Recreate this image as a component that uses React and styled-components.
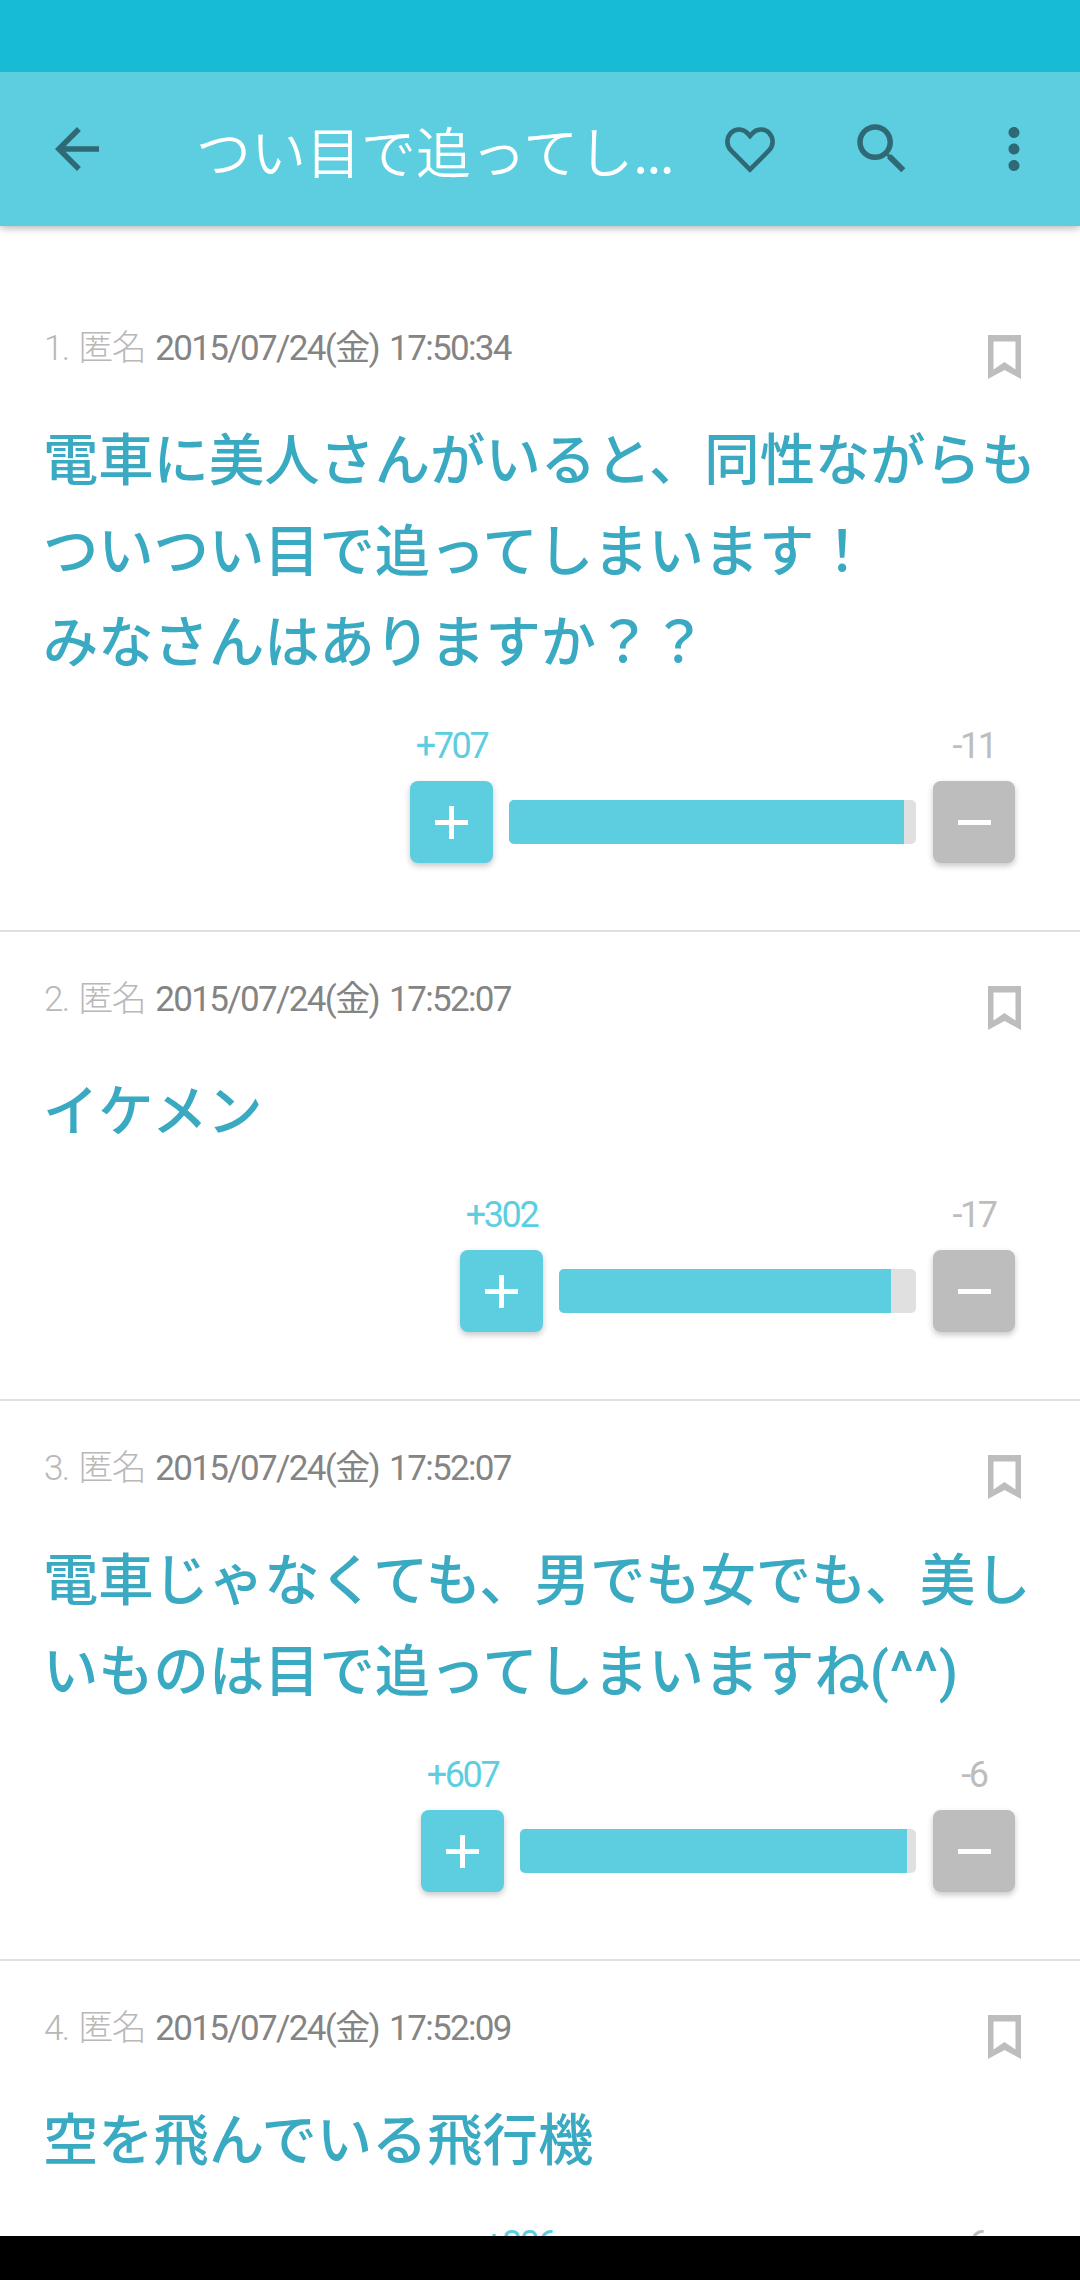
import React from "react";
import styled, { createGlobalStyle } from "styled-components";

const Global = createGlobalStyle`
  html, body { margin: 0; padding: 0; background: #fff; }
  body { font-family: "Roboto", "Noto Sans CJK JP", sans-serif; }
`;
const Screen = styled.div`
  width: 1080px; height: 2280px; display: flex; flex-direction: column; overflow: hidden; background: #fff;
`;
const StatusBar = styled.div`height: 72px; flex: none; background: #17bcd4; position: relative; z-index: 2;`;
const Toolbar = styled.header`
  height: 154px; flex: none; background: #5dcedf; display: flex; align-items: center;
  padding: 0 33px 0 44px; box-shadow: 0 2px 8px rgba(0,0,0,.3); position: relative; z-index: 1;
`;
const TitleText = styled.h1`
  margin: 0 0 0 86px; flex: 1; min-width: 0; font-family: "Noto Sans CJK JP", sans-serif;
  font-weight: 350; font-size: 55px; line-height: 78px; color: #fff; white-space: nowrap; overflow: hidden;
`;
const TitleDots = styled.span`letter-spacing: -1.5px;`;
const ActionIcons = styled.div`display: flex; gap: 66px; align-items: center;`;
const Glyph = styled.svg`width: 66px; height: 66px; display: block; fill: #2f6975; flex: none;`;
const HeartGlyph = styled.svg`
  width: 50px; height: 46px; display: block; flex: none; margin: 1px 8px 0; fill: none; stroke: #2f6975; stroke-width: 4.6px; stroke-linejoin: miter;
`;
const BookmarkGlyph = styled.svg`width: 33px; height: 44px; display: block; flex: none; margin-top: 8px; fill: #bdbdbd;`;
const List = styled.main`flex: 1; min-height: 0; overflow: hidden; padding-top: 55px;`;
const Item = styled.article`
  padding: 46px 65px 67px 44px;
  border-bottom: 2px solid #e0e0e0;
  &:last-child { border-bottom: 0; }
`;
const Head = styled.div`display: flex; justify-content: space-between; align-items: flex-start; height: 84px; margin-right: -6px;`;
const Meta = styled.div`
  font-size: 35px; line-height: 44px; font-weight: 400; color: #848484; letter-spacing: -1.65px; word-spacing: 3px;
  font-family: "Roboto", "Noto Sans CJK JP", sans-serif;
`;
const Author = styled.span`color: #b8b8b8; font-weight: 300;`;
const Body = styled.p`
  margin: 0 -34px 0 -1px; font-family: "Noto Sans CJK JP", sans-serif; font-weight: 500; font-size: 55.3px;
  line-height: 91px; color: #3aa9c2; white-space: pre-line;
`;
const Latin = styled.span`font-family: "Roboto", sans-serif; line-height: 1; letter-spacing: 0.8px;`;
const Vote = styled.div`display: flex; justify-content: flex-end; align-items: flex-end; margin-top: 39px;`;
const VoteSide = styled.div`display: flex; flex-direction: column; align-items: center; flex: none;`;
const Count = styled.div`
  font-size: 36px; line-height: 46px; height: 46px; margin-bottom: 12px; font-weight: 400;
  font-family: "Roboto", sans-serif; letter-spacing: -2.4px; color: ${p => p.$up ? "#5dcedf" : "#bdbdbd"};
`;
const VoteButton = styled.button`
  width: ${p => p.$up ? 83 : 82}px; height: 82px; border: 0; padding: 0; border-radius: 8px; display: flex; align-items: center; justify-content: center;
  background: ${p => p.$up ? "#5dcedf" : "#bdbdbd"}; box-shadow: 0 3px 6px rgba(0,0,0,.22);
`;
const Mark = styled.span`
  position: relative; display: block; width: 33px; height: 5px; background: #fff;
  &::after { content: ""; display: ${p => p.$plus ? "block" : "none"}; position: absolute; left: 14px; top: -14px; width: 5px; height: 33px; background: #fff; }
`;
const Track = styled.div`
  height: 44px; flex: none; margin: 0 17px 19px 16px; background: #e0e0e0; border-radius: 5px; overflow: hidden;
`;
const Fill = styled.div`height: 100%; background: #5dcedf;`;
const NavBar = styled.div`height: 44px; flex: none; background: #000; position: relative; z-index: 2;`;

const Icon = ({ d }) => (
  <Glyph viewBox="0 0 24 24"><path d={d} /></Glyph>
);
const Heart = () => (
  <HeartGlyph viewBox="0 0 50 46">
    <path d="M25 42.6 L6 23.4 C0.8 18 1.6 10.4 6 5.8 C10.6 1.2 18.5 1.4 23 6.7 L25 9 L27 6.7 C31.5 1.4 39.4 1.2 44 5.8 C48.4 10.4 49.2 18 44 23.4 Z" />
  </HeartGlyph>
);
const Bookmark = () => (
  <BookmarkGlyph viewBox="0 0 33 44">
    <path fillRule="evenodd" d="M0 0H33V44L16.5 35L0 44Z M5.5 6.5V34.5L16.5 27L27.5 34.5V6.5Z" />
  </BookmarkGlyph>
);
const P = {
  back: "M20 11H7.83l5.59-5.59L12 4l-8 8 8 8 1.41-1.41L7.83 13H20v-2z",
  search: "M15.5 14h-.79l-.28-.27C15.41 12.59 16 11.11 16 9.5 16 5.91 13.09 3 9.5 3S3 5.91 3 9.5 5.91 16 9.5 16c1.61 0 3.09-.59 4.23-1.57l.27.28v.79l5 4.99L20.49 19l-4.99-5zm-6 0C7.01 14 5 11.99 5 9.5S7.01 5 9.5 5 14 7.01 14 9.5 11.99 14 9.5 14z",
  more: "M12 8c1.1 0 2-.9 2-2s-.9-2-2-2-2 .9-2 2 .9 2 2 2zm0 2c-1.1 0-2 .9-2 2s.9 2 2 2 2-.9 2-2-.9-2-2-2zm0 6c-1.1 0-2 .9-2 2s.9 2 2 2 2-.9 2-2-.9-2-2-2z",
};

const posts = [
  { n: 1, date: "2015/07/24(金) 17:50:34", text: "電車に美人さんがいると、同性ながらも\nついつい目で追ってしまいます！\nみなさんはありますか？？", up: 707, down: 11, bar: 407, fill: 97 },
  { n: 2, date: "2015/07/24(金) 17:52:07", text: "イケメン", up: 302, down: 17, bar: 357, fill: 93 },
  { n: 3, date: "2015/07/24(金) 17:52:07", text: "電車じゃなくても、男でも女でも、美し\nいものは目で追ってしまいますね", latin: "(^^)", up: 607, down: 6, bar: 396, fill: 97.7 },
  { n: 4, date: "2015/07/24(金) 17:52:09", text: "空を飛んでいる飛行機", up: 806, down: 6, bar: 339, fill: 97 },
];

export default function App() {
  return (
    <Screen>
      <Global />
      <StatusBar />
      <Toolbar>
        <Icon d={P.back} />
        <TitleText>つい目で追ってし<TitleDots>...</TitleDots></TitleText>
        <ActionIcons>
          <Heart />
          <Icon d={P.search} />
          <Icon d={P.more} />
        </ActionIcons>
      </Toolbar>
      <List>
        {posts.map(p => (
          <Item key={p.n}>
            <Head>
              <Meta><Author>{p.n}. 匿名</Author> {p.date}</Meta>
              <Bookmark />
            </Head>
            <Body>{p.text}{p.latin && <Latin>{p.latin}</Latin>}</Body>
            <Vote>
              <VoteSide>
                <Count $up>+{p.up}</Count>
                <VoteButton $up><Mark $plus /></VoteButton>
              </VoteSide>
              <Track style={{ width: p.bar }}><Fill style={{ width: `${p.fill}%` }} /></Track>
              <VoteSide>
                <Count>-{p.down}</Count>
                <VoteButton><Mark /></VoteButton>
              </VoteSide>
            </Vote>
          </Item>
        ))}
      </List>
      <NavBar />
    </Screen>
  );
}
